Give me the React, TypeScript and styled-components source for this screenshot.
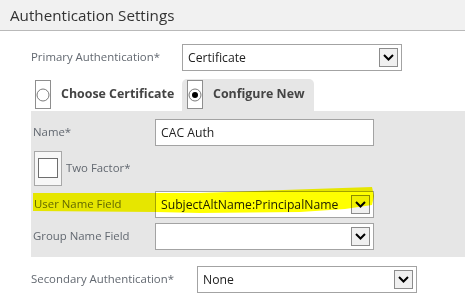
import styled, { createGlobalStyle } from 'styled-components';

const GlobalStyle = createGlobalStyle`
  body {
    margin: 0;
    background: #fff;
    font-family: "Open Sans", "Noto Sans", sans-serif;
  }
`

const Page = styled.div`
  width: 465px;
  height: 302px;
  overflow: hidden;
`

const Header = styled.div`
  height: 30px;
  background: #f1f1f1;
  border-bottom: 1px solid #b9b9b9;
  display: flex;
  align-items: center;
  padding-left: 10px;
`

const Title = styled.h1`
  margin: 0;
  font-size: 15.2px;
  font-weight: 400;
  color: #333;
`

const Form = styled.div`
  padding: 13px 0 0 31px;
  display: flex;
  flex-direction: column;
`

const FieldRow = styled.div<{ $labelWidth: number; $top?: number }>`
  display: grid;
  grid-template-columns: ${p => p.$labelWidth}px auto;
  align-items: center;
  margin-top: ${p => p.$top ?? 0}px;
`

const Label = styled.span<{ $pad?: number }>`
  font-size: 11.4px;
  color: #626870;
  padding-left: ${p => p.$pad ?? 0}px;
  padding-bottom: 2px;
  white-space: nowrap;
`

const Box = styled.div<{ $width: number }>`
  width: ${p => p.$width}px;
  height: 27px;
  box-sizing: border-box;
  border: 1px solid #a3a3a3;
  background: #fff;
  display: flex;
  align-items: center;
  padding-left: 5px;
  font-size: 12.2px;
  color: #222;
  white-space: nowrap;
`

const Value = styled.span`
  flex: 1;
`

const DropBtn = styled.span`
  width: 19px;
  height: 19px;
  box-sizing: border-box;
  margin-right: 3px;
  border: 1px solid #8c8c8c;
  background: #f0f0f0;
  display: flex;
  align-items: center;
  justify-content: center;
`

const Tabs = styled.div`
  display: flex;
  margin-top: 8px;
  height: 32px;
`

const Tab = styled.div<{ $active?: boolean; $width: number; $pad: number }>`
  width: ${p => p.$width}px;
  box-sizing: border-box;
  padding-left: ${p => p.$pad}px;
  background: ${p => (p.$active ? '#e6e6e6' : 'transparent')};
  border-radius: 5px 5px 0 0;
  display: flex;
  align-items: flex-start;
  gap: 10px;
`

const RadioFrame = styled.span`
  width: 16px;
  height: 29px;
  margin-top: 1px;
  box-sizing: border-box;
  border: 1px solid #8e8e8e;
  background: #fff;
  display: flex;
  align-items: center;
  justify-content: center;
`

const TabText = styled.span`
  font-size: 12.4px;
  font-weight: 700;
  color: #444;
  line-height: 29px;
  white-space: nowrap;
`

const Panel = styled.div`
  background: #e6e6e6;
  padding: 8px 0 7px 0;
  display: flex;
  flex-direction: column;
  gap: 5px;
`

const PanelRow = styled.div`
  position: relative;
  display: grid;
  grid-template-columns: 124px auto;
  align-items: center;
`

const CheckRow = styled.div`
  display: flex;
  align-items: center;
  padding-left: 3px;
  gap: 4px;
`

const CheckFrame = styled.span`
  width: 28px;
  height: 35px;
  box-sizing: border-box;
  border: 1px solid #a8a8a8;
  background: #f7f7f7;
  padding: 6px 0 0 3px;
`

const CheckSquare = styled.span`
  display: block;
  width: 20px;
  height: 20px;
  box-sizing: border-box;
  border: 1px solid #6e6e6e;
  background: #fff;
`

const Highlight = styled.svg`
  position: absolute;
  left: 2px;
  top: -4px;
  mix-blend-mode: multiply;
  pointer-events: none;
`

function Chevron() {
  return (
    <svg width="11" height="7" viewBox="0 0 11 7">
      <path d="M1 1 L5.5 5.5 L10 1" fill="none" stroke="#000" strokeWidth="2" />
    </svg>
  )
}

function Radio({ checked }: { checked?: boolean }) {
  return (
    <svg width="14" height="14" viewBox="0 0 14 14">
      <circle cx="7" cy="7" r="6" fill="#fff" stroke="#7a7a7a" strokeWidth="1" />
      {checked && <circle cx="7" cy="7" r="3" fill="#000" />}
    </svg>
  )
}

function Select({ width, value }: { width: number; value?: string }) {
  return (
    <Box $width={width}>
      <Value>{value}</Value>
      <DropBtn><Chevron /></DropBtn>
    </Box>
  )
}

export default function App() {
  return (
    <Page>
      <GlobalStyle />
      <Header>
        <Title>Authentication Settings</Title>
      </Header>
      <Form>
        <FieldRow $labelWidth={151}>
          <Label>Primary Authentication*</Label>
          <Select width={220} value="Certificate" />
        </FieldRow>

        <Tabs>
          <Tab $width={151} $pad={4}>
            <RadioFrame><Radio /></RadioFrame>
            <TabText>Choose Certificate</TabText>
          </Tab>
          <Tab $active $width={132} $pad={5}>
            <RadioFrame><Radio checked /></RadioFrame>
            <TabText>Configure New</TabText>
          </Tab>
        </Tabs>

        <Panel>
          <PanelRow>
            <Label $pad={2}>Name*</Label>
            <Box $width={219}>CAC Auth</Box>
          </PanelRow>
          <CheckRow>
            <CheckFrame><CheckSquare /></CheckFrame>
            <Label>Two Factor*</Label>
          </CheckRow>
          <PanelRow>
            <Label $pad={3}>User Name Field</Label>
            <Select width={219} value="SubjectAltName:PrincipalName" />
            {/* marker stroke drawn over the row */}
            <Highlight width="342" height="28" viewBox="0 0 342 28">
              <polygon
                points="0,6 167,6 250,3 339,0 341,9 339,18 312,22 267,25 167,26 122,25 0,24"
                fill="#ffff00"
              />
            </Highlight>
          </PanelRow>
          <PanelRow>
            <Label $pad={2}>Group Name Field</Label>
            <Select width={219} />
          </PanelRow>
        </Panel>

        <FieldRow $labelWidth={166} $top={9}>
          <Label>Secondary Authentication*</Label>
          <Select width={220} value="None" />
        </FieldRow>
      </Form>
    </Page>
  )
}
